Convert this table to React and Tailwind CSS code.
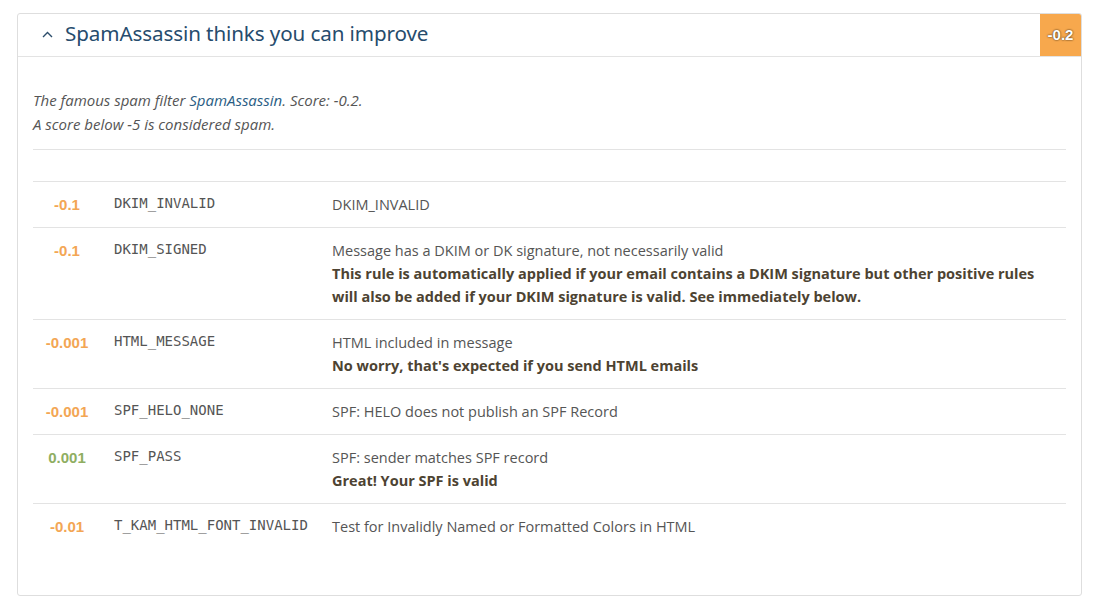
import React from "react";

const rows = [
  { score: "-0.1", pos: false, code: "DKIM_INVALID", desc: "DKIM_INVALID" },
  {
    score: "-0.1",
    pos: false,
    code: "DKIM_SIGNED",
    desc: "Message has a DKIM or DK signature, not necessarily valid",
    note: "This rule is automatically applied if your email contains a DKIM signature but other positive rules will also be added if your DKIM signature is valid. See immediately below.",
  },
  {
    score: "-0.001",
    pos: false,
    code: "HTML_MESSAGE",
    desc: "HTML included in message",
    note: "No worry, that's expected if you send HTML emails",
  },
  { score: "-0.001", pos: false, code: "SPF_HELO_NONE", desc: "SPF: HELO does not publish an SPF Record" },
  {
    score: "0.001",
    pos: true,
    code: "SPF_PASS",
    desc: "SPF: sender matches SPF record",
    note: "Great! Your SPF is valid",
  },
  { score: "-0.01", pos: false, code: "T_KAM_HTML_FONT_INVALID", desc: "Test for Invalidly Named or Formatted Colors in HTML" },
];

export default function App() {
  return (
    <div className="w-[1097px] h-[602px] bg-white pt-[13px] pl-[17px] font-['Open_Sans',sans-serif]">
      <div className="w-[1065px] h-[583px] border border-[#dedede] rounded-[3px] overflow-hidden">
        <div className="flex items-stretch h-[43px] border-b border-[#e3e3e3]">
          <div className="flex-1 flex items-center pl-[24px] pb-[3px]">
            <svg width="11" height="7" viewBox="0 0 11 7" className="mr-[12px] mt-[1px]">
              <path d="M1 6 L5.5 1.5 L10 6" fill="none" stroke="#2c4d6b" strokeWidth="1.4" />
            </svg>
            <span className="text-[20.6px] text-[#264c6d] tracking-[-0.1px] font-['Noto_Sans',sans-serif]">
              SpamAssassin thinks you can improve
            </span>
          </div>
          <div className="w-[41px] bg-[#f7a84d] flex items-center justify-center">
            <span className="text-white font-bold text-[15px] font-['Liberation_Sans',sans-serif] [text-shadow:0_0_2px_rgba(0,0,0,0.9)]">
              -0.2
            </span>
          </div>
        </div>
        <div className="px-[15px]">
          <div className="pt-[31px] pb-[13px] border-b border-[#e3e3e3] italic text-[15px] leading-[24px] text-[#555]">
            <div>
              The famous spam filter <span className="text-[#2a5d84]">SpamAssassin</span>. Score: -0.2.
            </div>
            <div>A score below -5 is considered spam.</div>
          </div>
          <div className="mt-[31px] border-t border-[#e3e3e3]">
            {rows.map((r, i) => (
              <div key={i} className="flex border-b border-[#e3e3e3] last:border-b-0 py-[11px] text-[14.5px] leading-[23px]">
                <div
                  className={`w-[68px] text-center font-bold text-[15px] font-['Liberation_Sans',sans-serif] ${
                    r.pos ? "text-[#8fae62]" : "text-[#f3a654]"
                  }`}
                >
                  {r.score}
                </div>
                <div className="w-[230px] pl-[13px] font-['DejaVu_Sans_Mono',monospace] text-[14px] leading-[21px] text-[#555]">
                  {r.code}
                </div>
                <div className="flex-1 pl-[1px] pr-[10px] text-[#555]">
                  <div>{r.desc}</div>
                  {r.note && <div className="font-bold text-[#4d4332]">{r.note}</div>}
                </div>
              </div>
            ))}
          </div>
        </div>
      </div>
    </div>
  );
}
